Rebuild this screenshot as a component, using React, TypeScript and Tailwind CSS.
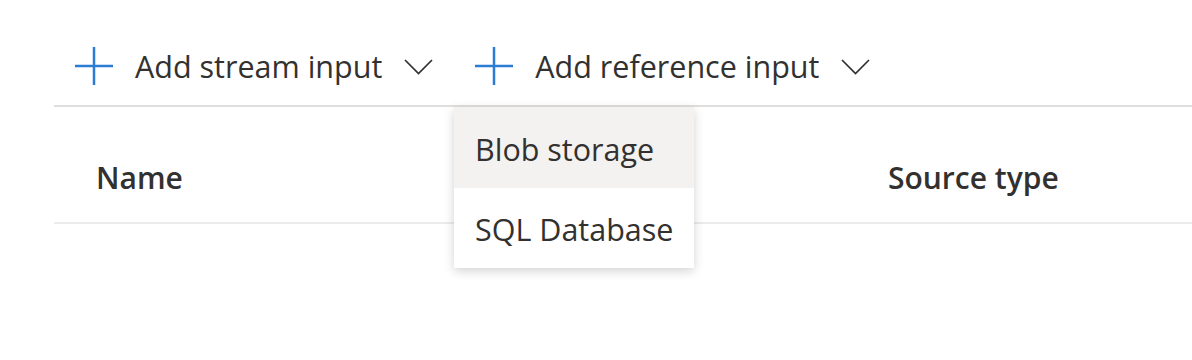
import React from 'react'

function PlusIcon() {
  return (
    <svg width="38" height="38" viewBox="0 0 38 38" className="shrink-0">
      <path d="M19 0v38M0 19h38" stroke="#2b7cd3" strokeWidth="2.5" fill="none" />
    </svg>
  )
}

function Chevron() {
  return (
    <svg width="29" height="16" viewBox="0 0 29 16" className="shrink-0">
      <path d="M1 1l13.5 13.5L28 1" stroke="#323130" strokeWidth="1.7" fill="none" />
    </svg>
  )
}

function ToolbarButton({ label }: { label: string }) {
  return (
    <button className="flex items-center h-[60px] text-[30.5px] text-[#323130]">
      <span className="-mt-[2px]">
        <PlusIcon />
      </span>
      <span className="ml-[22px]">{label}</span>
      <span className="ml-[22px]">
        <Chevron />
      </span>
    </button>
  )
}

export default function App() {
  return (
    <div
      className="relative w-[1192px] h-[360px] overflow-hidden bg-white"
      style={{ fontFamily: '"Open Sans", "Noto Sans", sans-serif' }}
    >
      <div className="ml-[54px]">
        {/* Toolbar */}
        <div className="flex items-center gap-[42px] h-[107px] pt-[29px] pl-[21px] border-b-2 border-[#e1dfdd]">
          <ToolbarButton label="Add stream input" />
          <ToolbarButton label="Add reference input" />
        </div>

        {/* Table header */}
        <div className="flex items-center h-[117px] pt-[26px] border-b-2 border-[#edebe9] text-[30px] font-semibold text-[#323130]">
          <div className="w-[834px] pl-[42px]">Name</div>
          <div>Source type</div>
        </div>
      </div>

      {/* Dropdown menu */}
      <div className="absolute left-[454px] top-[107px] w-[240px] bg-white shadow-[0_3px_10px_rgba(0,0,0,0.18)] text-[30.5px] text-[#323130]">
        <div className="flex items-center h-[81px] pl-[21px] pt-[4px] bg-[#f3f2f1]">Blob storage</div>
        <div className="flex items-center h-[80px] pl-[21px] pt-[4px]">SQL Database</div>
      </div>
    </div>
  )
}
